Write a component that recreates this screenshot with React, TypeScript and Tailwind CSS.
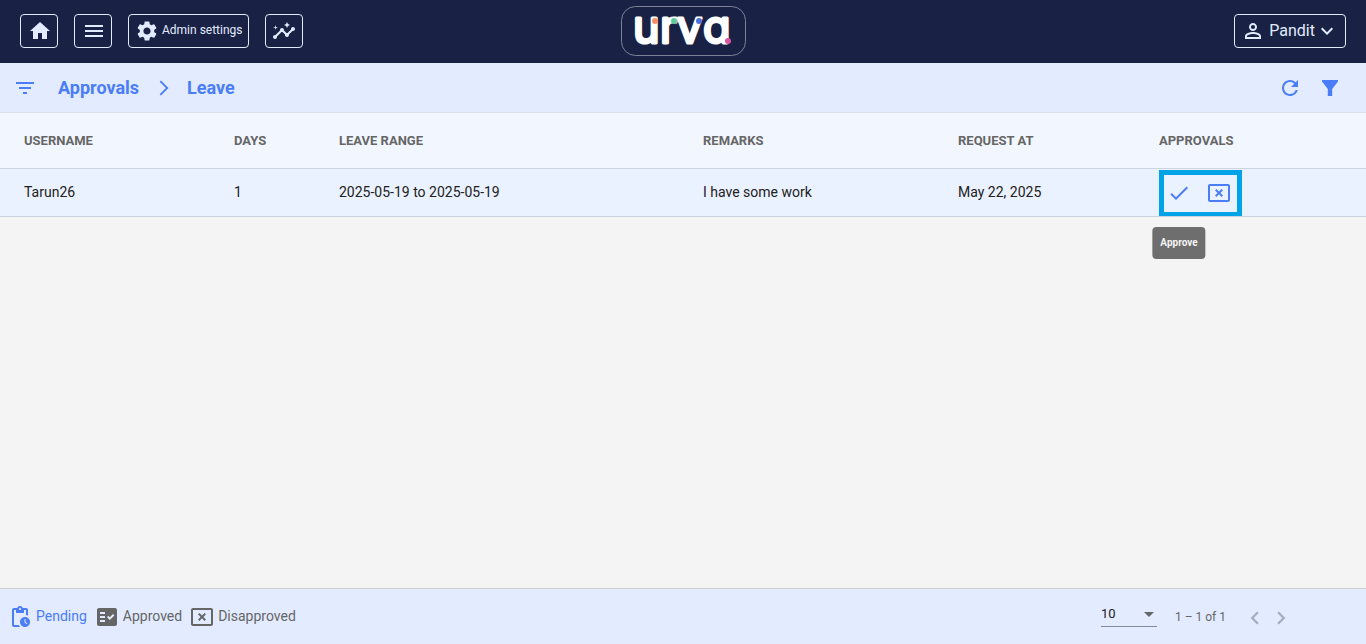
import type { ReactNode } from "react";
import {
  MdArrowDropDown,
  MdArrowForwardIos,
  MdCheck,
  MdChevronLeft,
  MdChevronRight,
  MdExpandMore,
  MdFactCheck,
  MdFilterList,
  MdHome,
  MdInsights,
  MdMenu,
  MdOutlineCancelPresentation,
  MdPendingActions,
  MdPersonOutline,
  MdRefresh,
  MdSettings,
} from "react-icons/md";

const columns = [
  { label: "Username", width: "w-[234px]" },
  { label: "Days", width: "w-[105px]" },
  { label: "Leave range", width: "w-[364px]" },
  { label: "Remarks", width: "w-[255px]" },
  { label: "Request at", width: "w-[201px]" },
  { label: "Approvals", width: "w-[207px]" },
];

const requests = [
  {
    username: "Tarun26",
    days: 1,
    range: "2025-05-19 to 2025-05-19",
    remarks: "I have some work",
    requestedAt: "May 22, 2025",
  },
];

function NavButton({ label, children }: { label: string; children: ReactNode }) {
  return (
    <button
      aria-label={label}
      className="flex h-[34px] min-w-[38px] items-center justify-center gap-[3px] rounded border border-[#e2ebff] pr-[5px] pl-[6px] text-xs text-[#e2ebff]"
    >
      {children}
    </button>
  );
}

function Logo() {
  return (
    <svg width="126" height="50" viewBox="0 0 126 50" role="img" aria-label="urva" className="overflow-visible">
      <rect x="1.5" y="0.5" width="124" height="49" rx="14" fill="none" stroke="#7d8296" />
      {/* cv11 is Inter's single-storey a */}
      <text
        x="13 40 57 83"
        y="37"
        fill="#fff"
        stroke="#fff"
        strokeWidth="3"
        strokeLinejoin="round"
        className="font-[Inter,sans-serif] text-[45px] font-normal [font-feature-settings:'cv11']"
      >
        urva
      </text>
      <circle cx="35" cy="15" r="3" fill="#f58f6c" />
      <circle cx="54" cy="15" r="3" fill="#5fcb9b" />
      <circle cx="79" cy="15" r="3" fill="#4f6fe0" />
      <circle cx="108" cy="35" r="3" fill="#d9569f" />
    </svg>
  );
}

function Header() {
  return (
    <header className="grid h-[63px] grid-cols-[1fr_auto_1fr] items-center bg-[#192144] px-5 pb-0.5">
      <nav className="flex gap-4">
        <NavButton label="Home">
          <MdHome size={24} />
        </NavButton>
        <NavButton label="Menu">
          <MdMenu size={24} />
        </NavButton>
        <NavButton label="Admin settings">
          <MdSettings size={24} />
          <span className="pb-0.5">Admin settings</span>
        </NavButton>
        <NavButton label="Insights">
          <MdInsights size={24} />
        </NavButton>
      </nav>
      <Logo />
      <button className="flex h-[34px] items-center justify-self-end rounded border border-[#e2ebff] px-[6px] text-base text-[#e2ebff]">
        <MdPersonOutline size={24} className="mr-1" />
        Pandit
        <MdExpandMore size={24} />
      </button>
    </header>
  );
}

function Toolbar() {
  return (
    <div className="flex h-[50px] items-center justify-between border-b border-[#dde1ea] bg-[#e2ebff] px-[13px] text-[#4a7df6]">
      <div className="flex items-center text-lg font-bold">
        <button aria-label="Toggle list" className="mr-[21px]">
          <MdFilterList size={24} />
        </button>
        <a href="#approvals">Approvals</a>
        <MdArrowForwardIos size={18} className="mr-[14px] ml-4" />
        <a href="#leave">Leave</a>
      </div>
      <div className="flex items-center gap-4 pr-[11px]">
        <button aria-label="Refresh">
          <MdRefresh size={24} />
        </button>
        <button aria-label="Filter" className="p-1">
          <svg width="16" height="16" viewBox="0 0 16 16" fill="currentColor">
            <path d="M0 0h16v1.6L10.2 9V16H5.8V9L0 1.6z" />
          </svg>
        </button>
      </div>
    </div>
  );
}

function RequestsTable() {
  return (
    <table className="w-full table-fixed border-collapse text-left">
      <thead className="bg-[#f2f7ff] text-[13px] text-[#666] uppercase">
        <tr className="h-[55px] border-b border-[#ced3e0]">
          {columns.map((column) => (
            <th key={column.label} className={`${column.width} p-0 font-bold first:pl-6`}>
              {column.label}
            </th>
          ))}
        </tr>
      </thead>
      <tbody className="text-sm text-[#212121]">
        {requests.map((request) => (
          <tr key={request.username} className="h-12 border-b border-[#ced3e0] bg-[#ebf2ff]">
            <td className="p-0 pl-6">{request.username}</td>
            <td className="p-0">{request.days}</td>
            <td className="p-0">{request.range}</td>
            <td className="p-0">{request.remarks}</td>
            <td className="p-0">{request.requestedAt}</td>
            <td className="p-0">
              <div className="mt-px -mb-px flex h-[47px] w-[83px] items-center gap-4 border-5 border-[#00a2e8] px-[3px] text-[#4a7df6]">
                <div className="relative">
                  <button aria-label="Approve" className="block">
                    <MdCheck size={24} />
                  </button>
                  <div
                    role="tooltip"
                    className="absolute top-full left-1/2 mt-[22px] flex h-8 -translate-x-1/2 items-center rounded bg-[#6e6e6e] px-2 text-[10px] font-bold text-[#f4f4f4]"
                  >
                    Approve
                  </div>
                </div>
                <button aria-label="Disapprove">
                  <MdOutlineCancelPresentation size={24} />
                </button>
              </div>
            </td>
          </tr>
        ))}
      </tbody>
    </table>
  );
}

function Footer() {
  return (
    <footer className="flex h-14 items-center justify-between border-t border-[#cfd0d2] bg-[#e2ebff] pr-[72px] pl-2 text-[#666]">
      <div className="flex items-center gap-2 text-sm">
        <button className="flex items-center gap-1 text-[#4a7df6]">
          <MdPendingActions size={24} />
          <span className="pb-0.5">Pending</span>
        </button>
        <button className="flex items-center gap-1">
          <MdFactCheck size={24} />
          <span className="pb-0.5">Approved</span>
        </button>
        <button className="flex items-center gap-1">
          <MdOutlineCancelPresentation size={24} />
          <span className="pb-0.5">Disapproved</span>
        </button>
      </div>
      <div className="flex items-center text-xs">
        <div className="relative mr-[18px] mb-1 w-14 border-b border-[#868a98]">
          <select
            aria-label="Items per page"
            defaultValue="10"
            className="block h-6 w-full appearance-none bg-transparent text-[13px] text-[#212121]"
          >
            <option>10</option>
            <option>25</option>
            <option>50</option>
          </select>
          <MdArrowDropDown size={24} className="pointer-events-none absolute top-0 -right-1 text-[#666]" />
        </div>
        <span className="mr-4">1 – 1 of 1</span>
        <button aria-label="Previous page" disabled className="pt-0.5 text-[#a5acbd]">
          <MdChevronLeft size={26} />
        </button>
        <button aria-label="Next page" disabled className="pt-0.5 text-[#a5acbd]">
          <MdChevronRight size={26} />
        </button>
      </div>
    </footer>
  );
}

export default function App() {
  return (
    <div className="flex min-h-screen flex-col bg-[#f4f4f4] font-[Roboto,sans-serif]">
      <Header />
      <Toolbar />
      <main className="flex-1">
        <RequestsTable />
      </main>
      <Footer />
    </div>
  );
}
